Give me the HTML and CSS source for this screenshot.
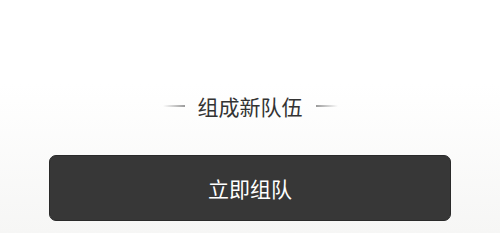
FILE: index.html
```html
<!DOCTYPE html>
<html lang="zh">
<head>
<meta charset="utf-8">
<link rel="stylesheet" href="styles.css">
</head>
<body>
<div class="page">
  <div class="heading">
    <span class="line line-left"></span>
    <span class="title">组成新队伍</span>
    <span class="line line-right"></span>
  </div>
  <button class="btn">立即组队</button>
</div>
</body>
</html>
```
FILE: styles.css
```css
html, body {
  margin: 0;
  padding: 0;
}
body {
  font-family: "Noto Sans CJK SC", "Noto Sans", sans-serif;
}
.page {
  box-sizing: border-box;
  width: 500px;
  height: 233px;
  padding-top: 92px;
  display: flex;
  flex-direction: column;
  align-items: center;
  background: linear-gradient(to bottom, #ffffff 0%, #ffffff 36%, #f6f6f5 100%);
}
.heading {
  display: flex;
  align-items: center;
  gap: 13px;
  height: 28px;
}
.title {
  font-size: 21px;
  line-height: 28px;
  color: #333333;
}
.line {
  display: block;
  width: 22px;
  height: 2px;
}
.line-left {
  background: linear-gradient(to right, rgba(150,150,150,0), #9a9a9a);
}
.line-right {
  background: linear-gradient(to left, rgba(150,150,150,0), #9a9a9a);
}
.btn {
  margin-top: 35px;
  width: 402px;
  height: 66px;
  border: 1px solid #2a2a2a;
  border-radius: 7px;
  background: #373737;
  color: #ffffff;
  font-family: inherit;
  font-size: 21px;
  padding: 0;
  cursor: pointer;
}
```
